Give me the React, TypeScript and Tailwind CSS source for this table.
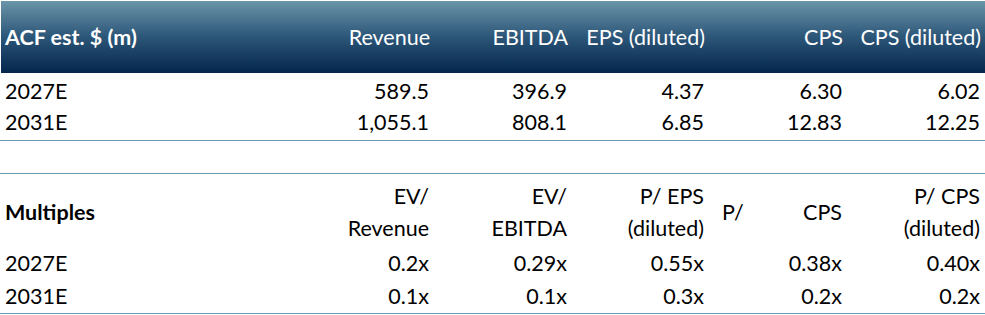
const font = { fontFamily: "Lato, 'Open Sans', sans-serif" };

const top = [
  ["2027E", "589.5", "396.9", "4.37", "6.30", "6.02"],
  ["2031E", "1,055.1", "808.1", "6.85", "12.83", "12.25"],
];

const multiples = [
  ["2027E", "0.2x", "0.29x", "0.55x", "0.38x", "0.40x"],
  ["2031E", "0.1x", "0.1x", "0.3x", "0.2x", "0.2x"],
];

const cols = "grid grid-cols-[296px_138px_138px_137px_138px_138px]";

export default function App() {
  return (
    <div className="w-[985px] h-[315px] bg-white text-[21.5px] text-black overflow-hidden" style={font}>
      <div className={`${cols} ml-[1px] mt-[1px] h-[72px] items-center text-white bg-gradient-to-b from-[#6b95a8] via-[#2c5678] to-[#05264d]`}>
        <div className="pl-[4px] font-bold">ACF est. $ (m)</div>
        <div className="text-right pr-[5px]">Revenue</div>
        <div className="text-right pr-[5px]">EBITDA</div>
        <div className="text-right pr-[5px] whitespace-nowrap">EPS (diluted)</div>
        <div className="text-right pr-[5px]">CPS</div>
        <div className="text-right pr-[5px] whitespace-nowrap">CPS (diluted)</div>
      </div>

      <div className="pt-[2px] pb-[3px] border-b border-[#6c9cb3]">
        {top.map((r) => (
          <div key={r[0]} className={`${cols} h-[31px] items-center`}>
            <div className="pl-[5px]">{r[0]}</div>
            {r.slice(1).map((v, i) => (
              <div key={i} className="text-right pr-[5px]">{v}</div>
            ))}
          </div>
        ))}
      </div>

      <div className="h-[32px]" />

      <div className="border-t border-b border-[#6c9cb3]">
        <div className={`${cols} h-[73px] items-center leading-[32px] pt-[2px]`}>
          <div className="pl-[5px] font-bold">Multiples</div>
          <div className="text-right pr-[5px]">EV/<br />Revenue</div>
          <div className="text-right pr-[5px]">EV/<br />EBITDA</div>
          <div className="text-right pr-[5px]">P/ EPS<br />(diluted)</div>
          <div className="flex items-center justify-between">
            <span className="pl-[13px]">P/</span>
            <span className="pr-[5px]">CPS</span>
          </div>
          <div className="text-right pr-[5px]">P/ CPS<br />(diluted)</div>
        </div>
        {multiples.map((r) => (
          <div key={r[0]} className={`${cols} h-[33px] items-center`}>
            <div className="pl-[5px]">{r[0]}</div>
            {r.slice(1).map((v, i) => (
              <div key={i} className="text-right pr-[5px]">{v}</div>
            ))}
          </div>
        ))}
      </div>
    </div>
  );
}
